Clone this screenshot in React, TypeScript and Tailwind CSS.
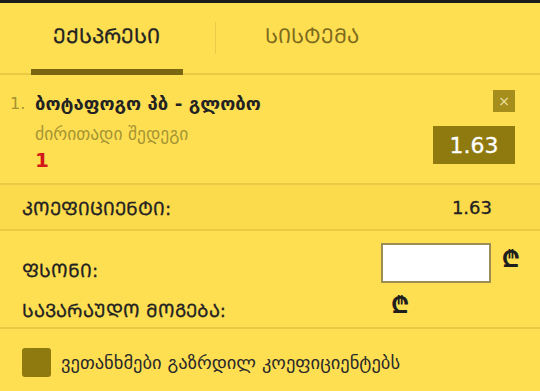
import React, { useState } from 'react';

const font = { fontFamily: '"DejaVu Sans", "Noto Sans", sans-serif' };

function Lari({ className = '' }: { className?: string }) {
  return <span className={`text-[23px] leading-none font-bold text-[#1e1e1e] ${className}`}>₾</span>;
}

const label = 'text-[#222] [-webkit-text-stroke:0.3px_#222]';

export default function App() {
  const [tab, setTab] = useState(0);
  const [stake, setStake] = useState('');
  const [agree, setAgree] = useState(false);

  return (
    <div className="w-[540px] h-[391px] bg-[#ffdf52] overflow-hidden" style={font}>
      <div className="h-[3px] bg-[#1b1b1b]" />

      {/* tabs */}
      <div className="flex h-[72px] border-b-2 border-[#ebca43]">
        <button
          onClick={() => setTab(0)}
          className={`relative w-[215px] flex items-center justify-center pr-[3px] pb-[4px] text-[20.5px] ${tab === 0 ? label : 'text-[#7c6a1c]'}`}
        >
          ᲔᲥᲡᲞᲠᲔᲡᲘ
          {tab === 0 && <span className="absolute left-[31px] w-[152px] bottom-[-2px] h-[6px] bg-[#7a6611]" />}
        </button>
        <div className="w-px my-[19px] bg-[#eacb45]" />
        <button
          onClick={() => setTab(1)}
          className={`relative w-[192px] flex items-center justify-center pb-[4px] text-[20.5px] ${tab === 1 ? label : 'text-[#7c6a1c]'}`}
        >
          ᲡᲘᲡᲢᲔᲛᲐ
          {tab === 1 && <span className="absolute left-[20px] w-[152px] bottom-[-2px] h-[6px] bg-[#7a6611]" />}
        </button>
      </div>

      {/* selection */}
      <div className="flex justify-between pl-[10px] pr-[25px] pt-[14px] h-[110px] border-b-2 border-[#ebca43]">
        <div className="flex">
          <span className="w-[25px] text-[16px] leading-[30px] text-[#a5922f]">1.</span>
          <div className="flex flex-col">
            <span className="text-[18.5px] leading-[30px] font-bold text-[#222]">ბოტაფოგო პბ - გლობო</span>
            <span className="text-[17.5px] leading-[26px] mt-[2px] text-[#a69532]">ძირითადი შედეგი</span>
            <span className="text-[20px] leading-[26px] font-bold text-[#d3171a]">1</span>
          </div>
        </div>
        <div className="flex flex-col items-end">
          <button className="w-[22px] h-[22px] mt-[1px] bg-[#a58e1c] flex items-center justify-center text-[#efe3a2] text-[14px] leading-none">
            ×
          </button>
          <div className="mt-[14px] w-[82px] h-[38px] bg-[#8f7a0f] flex items-center justify-center text-white text-[22px] [-webkit-text-stroke:0.3px_#fff]">
            1.63
          </div>
        </div>
      </div>

      {/* coefficient */}
      <div className="flex items-center justify-between h-[46px] bg-[#fbda4c] border-b-2 border-[#ebca43] pl-[22px] pr-[48px]">
        <span className={`text-[18.4px] mt-[4px] ${label}`}>ᲙᲝᲔᲤᲘᲪᲘᲔᲜᲢᲘ:</span>
        <span className={`text-[18px] ${label}`}>1.63</span>
      </div>

      {/* stake */}
      <div className="h-[98px] border-b-2 border-[#ebca43] pl-[22px] pr-[20px]">
        <div className="flex items-center justify-between pt-[10px]">
          <span className={`text-[18.5px] mt-[16px] ${label}`}>ᲤᲡᲝᲜᲘ:</span>
          <div className="flex items-center gap-[11px]">
            <input
              value={stake}
              onChange={(e) => setStake(e.target.value)}
              className="w-[110px] h-[40px] bg-white border-2 border-[#9d8e53] outline-none px-2 text-[16px]"
            />
            <Lari className="mt-[-6px]" />
          </div>
        </div>
        <div className="flex items-center mt-[8px]">
          <span className={`text-[18.4px] w-[369px] mt-[4px] ${label}`}>ᲡᲐᲕᲐᲠᲐᲣᲓᲝ ᲛᲝᲒᲔᲑᲐ:</span>
          <Lari className="mt-[-6px]" />
        </div>
      </div>

      {/* checkbox */}
      <label className="flex items-center gap-[10px] pl-[22px] pt-[19px] cursor-pointer">
        <span
          onClick={() => setAgree(!agree)}
          className="w-[29px] h-[29px] rounded-[3px] bg-[#8f7a0f] flex items-center justify-center text-white text-[16px]"
        >
          {agree ? '✓' : ''}
        </span>
        <span className="text-[18.5px] text-[#2a2a2a]">ვეთანხმები გაზრდილ კოეფიციენტებს</span>
      </label>
    </div>
  );
}
